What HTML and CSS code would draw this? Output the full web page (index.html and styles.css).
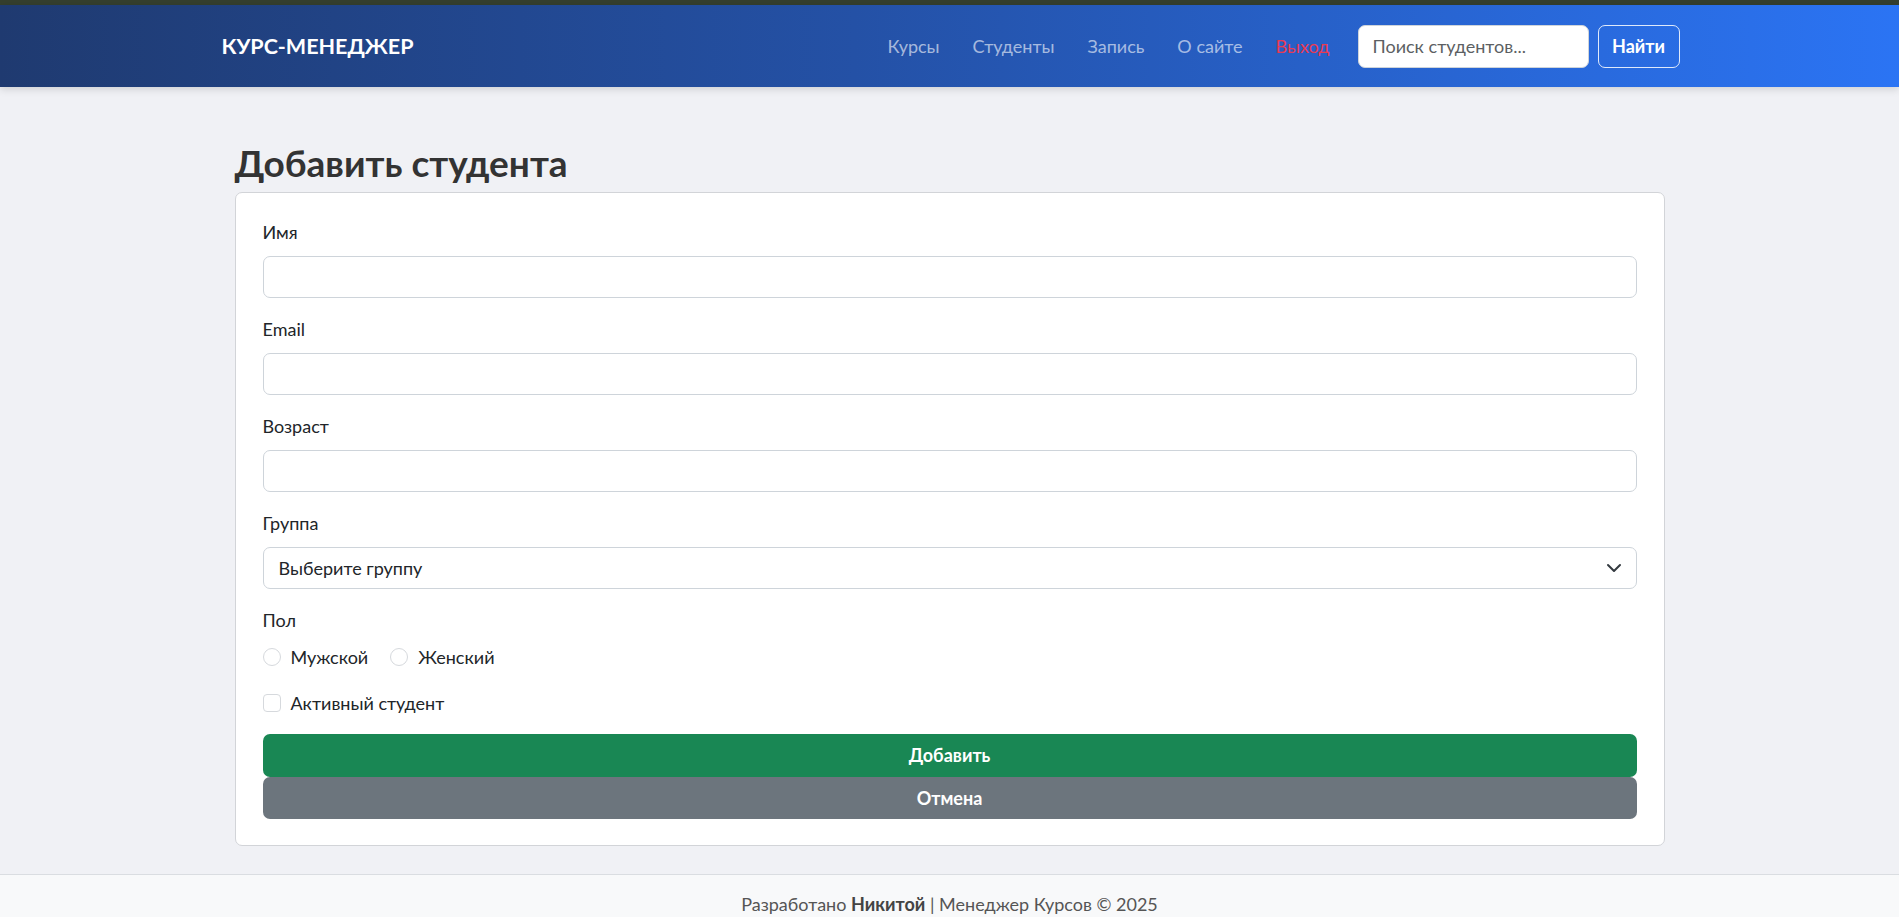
FILE: index.html
```html
<!DOCTYPE html>
<html lang="ru">
<head>
<meta charset="utf-8">
<title>Добавить студента</title>
<link rel="stylesheet" href="styles.css">
</head>
<body>
<div class="topstrip"></div>
<header class="navbar">
  <div class="nav-container">
    <a class="brand" href="#">КУРС-МЕНЕДЖЕР</a>
    <div class="nav-right">
      <ul class="nav-links">
        <li><a href="#">Курсы</a></li>
        <li><a href="#">Студенты</a></li>
        <li><a href="#">Запись</a></li>
        <li><a href="#">О сайте</a></li>
        <li><a href="#" class="logout">Выход</a></li>
      </ul>
      <form class="search">
        <input class="search-input" type="text" placeholder="Поиск студентов...">
        <button class="search-btn" type="button">Найти</button>
      </form>
    </div>
  </div>
</header>

<main class="container">
  <h1 class="page-title">Добавить студента</h1>
  <div class="card">
    <form class="student-form">
      <div class="group">
        <label class="form-label">Имя</label>
        <input class="form-control" type="text">
      </div>
      <div class="group">
        <label class="form-label">Email</label>
        <input class="form-control" type="email">
      </div>
      <div class="group">
        <label class="form-label">Возраст</label>
        <input class="form-control" type="number">
      </div>
      <div class="group">
        <label class="form-label">Группа</label>
        <div class="select-wrap">
          <select class="form-select">
            <option>Выберите группу</option>
          </select>
          <svg class="chevron" width="16" height="16" viewBox="0 0 16 16"><path d="M2 5l6 6 6-6" fill="none" stroke="#343a40" stroke-width="2" stroke-linecap="round" stroke-linejoin="round"/></svg>
        </div>
      </div>
      <div class="group-radio">
        <label class="form-label">Пол</label>
        <div class="radio-row">
          <label class="check"><span class="radio"></span>Мужской</label>
          <label class="check"><span class="radio"></span>Женский</label>
        </div>
      </div>
      <div class="check-row">
        <label class="check"><span class="checkbox"></span>Активный студент</label>
      </div>
      <div class="actions">
        <button type="button" class="btn btn-success">Добавить</button>
        <button type="button" class="btn btn-secondary">Отмена</button>
      </div>
    </form>
  </div>
</main>

<footer class="footer">
  <p>Разработано <strong>Никитой</strong> | Менеджер Курсов © 2025</p>
</footer>
</body>
</html>
```
FILE: styles.css
```css
* { box-sizing: border-box; }

body {
  margin: 0;
  font-family: Lato, "Noto Sans", sans-serif;
  font-size: 18px;
  line-height: 27px;
  color: #212529;
  background: #f0f1f5;
}

.topstrip {
  height: 5px;
  background: #353f2e;
}

.navbar {
  height: 82px;
  background: linear-gradient(90deg, #1f3a70 0%, #2451a6 45%, #2b74f4 100%);
  box-shadow: 0 2px 8px rgba(0, 0, 0, 0.15);
  position: relative;
  z-index: 1;
}

.nav-container {
  width: 1460px;
  margin: 0 auto;
  height: 100%;
  display: flex;
  align-items: center;
  justify-content: space-between;
}

.brand {
  color: #fff;
  text-decoration: none;
  font-weight: 700;
  font-size: 21.5px;
  margin-left: 2px;
}

.nav-right {
  display: flex;
  align-items: center;
}

.nav-links {
  list-style: none;
  margin: 0;
  padding: 0;
  display: flex;
  gap: 33px;
}

.nav-links a {
  color: rgba(255, 255, 255, 0.6);
  text-decoration: none;
  font-size: 18px;
}

.nav-links a.logout {
  color: #ea3a52;
}

.search {
  display: flex;
  align-items: center;
  gap: 9px;
  margin: 0 0 0 28px;
}

.search-input {
  width: 231px;
  height: 43px;
  border: 1px solid #ced4da;
  border-radius: 7px;
  padding: 0 14px;
  font-family: inherit;
  font-size: 18px;
  color: #212529;
  background: #fff;
}

.search-input::placeholder {
  color: #5c5f63;
}

.search-btn {
  width: 82px;
  height: 43px;
  border: 1px solid rgba(255, 255, 255, 0.85);
  border-radius: 7px;
  background: transparent;
  color: #fff;
  font-family: inherit;
  font-weight: 700;
  font-size: 18px;
  padding: 0;
}

.container {
  width: 1430px;
  margin: 0 auto;
  padding: 54px 0 28px;
}

.page-title {
  margin: 0 0 7px;
  font-size: 37px;
  line-height: 44px;
  font-weight: 700;
  color: #333;
}

.card {
  background: #fff;
  border: 1px solid #d2d4d8;
  border-radius: 7px;
  padding: 26px 27px;
}

.student-form {
  display: flex;
  flex-direction: column;
}

.group {
  margin-bottom: 18px;
}

.form-label {
  display: block;
  height: 27px;
  margin-bottom: 10px;
  color: #212529;
}

.form-control,
.form-select {
  display: block;
  width: 100%;
  height: 42px;
  border: 1px solid #ced4da;
  border-radius: 7px;
  background: #fff;
  font-family: inherit;
  font-size: 18px;
  color: #212529;
  padding: 0 15px;
}

.form-select {
  appearance: none;
  -webkit-appearance: none;
}

.select-wrap {
  position: relative;
}

.chevron {
  position: absolute;
  right: 15px;
  top: 13px;
  pointer-events: none;
}

.radio-row {
  display: flex;
  gap: 22px;
  height: 26px;
  align-items: center;
}

.check {
  display: flex;
  align-items: center;
  gap: 10px;
  color: #212529;
}

.radio,
.checkbox {
  width: 18px;
  height: 18px;
  border: 1px solid #d6d9dd;
  background: #fff;
  flex: none;
}

.radio {
  border-radius: 50%;
}

.checkbox {
  border-radius: 4px;
}

.check-row {
  margin-top: 20px;
  height: 26px;
  display: flex;
  align-items: center;
}

.actions {
  margin-top: 18px;
  display: flex;
  flex-direction: column;
}

.btn {
  display: block;
  width: 100%;
  height: 42.5px;
  border: none;
  border-radius: 7px;
  color: #fff;
  font-family: inherit;
  font-size: 18px;
  font-weight: 700;
}

.btn-success {
  background: #198754;
}

.btn-secondary {
  background: #6c757d;
}

.footer {
  background: #f8f9fa;
  border-top: 1px solid #dadde1;
  padding: 16px 0 20px;
  text-align: center;
  color: #555;
}

.footer p {
  margin: 0;
}

.footer strong {
  color: #444;
}
```
